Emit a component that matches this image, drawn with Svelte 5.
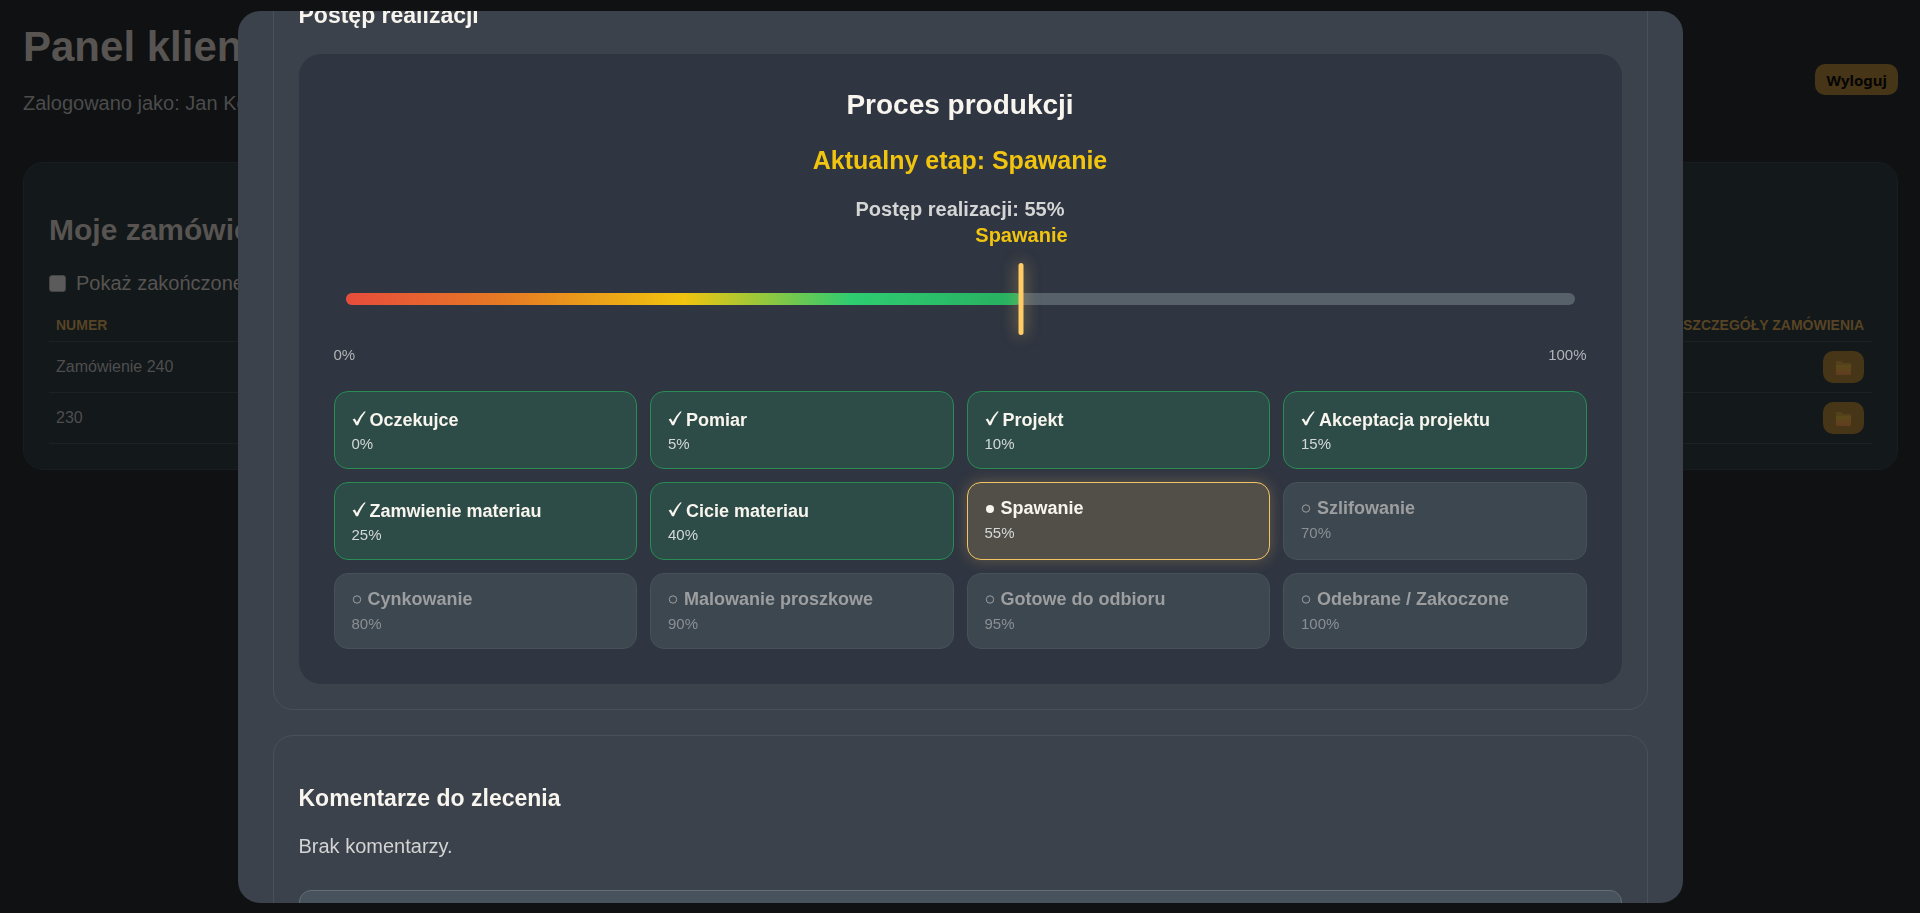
<script>
  const orders = ['Zamówienie 240', '230'];
  const progress = 55;
  const current = 'Spawanie';
  const stages = [
    ['Oczekujce', 0],
    ['Pomiar', 5],
    ['Projekt', 10],
    ['Akceptacja projektu', 15],
    ['Zamwienie materiau', 25],
    ['Cicie materiau', 40],
    ['Spawanie', 55],
    ['Szlifowanie', 70],
    ['Cynkowanie', 80],
    ['Malowanie proszkowe', 90],
    ['Gotowe do odbioru', 95],
    ['Odebrane / Zakoczone', 100]
  ].map(([name, value]) => ({
    name,
    value,
    state: value < progress ? 'done' : value === progress ? 'active' : 'pending'
  }));
</script>

<div class="page">
  <header>
    <div>
      <h1>Panel klienta</h1>
      <p>Zalogowano jako: Jan Kowalski</p>
    </div>
    <button class="logout">Wyloguj</button>
  </header>

  <main class="orders">
    <h2>Moje zamówienia</h2>
    <label class="filter"><input type="checkbox" />Pokaż zakończone</label>
    <table>
      <thead>
        <tr><th>Numer</th><th class="end">Szczegóły zamówienia</th></tr>
      </thead>
      <tbody>
        {#each orders as order}
          <tr>
            <td>{order}</td>
            <td class="end">
              <button class="details" aria-label="Szczegóły">
                <svg width="15" height="14" viewBox="0 0 15 14">
                  <defs>
                    <linearGradient id="folder" x1="0" y1="0" x2="0" y2="1">
                      <stop offset="0" stop-color="#5a4b1a" />
                      <stop offset="1" stop-color="#623c20" />
                    </linearGradient>
                  </defs>
                  <path d="M0 1Q0 0 1 0H5L7 2H14Q15 2 15 3V5H0Z" fill="#54401a" />
                  <path d="M0 4H15V13Q15 14 14 14H1Q0 14 0 13Z" fill="url(#folder)" />
                </svg>
              </button>
            </td>
          </tr>
        {/each}
      </tbody>
    </table>
  </main>
</div>

<div class="overlay">
  <div class="modal" role="dialog" aria-modal="true" aria-label="Szczegóły zamówienia">
    <section class="box scrolled">
      <h3>Postęp realizacji</h3>
      <div class="process">
        <h2>Proces produkcji</h2>
        <p class="stage">Aktualny etap: {current}</p>
        <p class="percent">Postęp realizacji: {progress}%</p>
        <div class="track">
          <div class="fill" style="width: {progress}%"></div>
          <div class="marker" style="left: {progress}%"><span>{current}</span></div>
        </div>
        <div class="scale"><span>0%</span><span>100%</span></div>
        <div class="stages">
          {#each stages as s}
            <div class="card {s.state}">
              <strong>
                {#if s.state === 'done'}
                  <svg width="14" height="15" viewBox="0 0 14 15">
                    <path d="M.6 8.6 2.8 7.4Q4 9 4.8 11Q8 4.600 12.200.600L13.800.600Q9 6.500 6 14.200H4Q2.600 11 .6 8.600Z" fill="currentColor" />
                  </svg>
                {:else}
                  <svg width="10" height="10" viewBox="0 0 10 10">
                    {#if s.state === 'active'}
                      <circle cx="5" cy="6" r="4" fill="currentColor" />
                    {:else}
                      <circle cx="5" cy="5.500" r="3.700" fill="none" stroke="currentColor" />
                    {/if}
                  </svg>
                {/if}
                {s.name}
              </strong>
              <span>{s.value}%</span>
            </div>
          {/each}
        </div>
      </div>
    </section>

    <section class="box">
      <h3>Komentarze do zlecenia</h3>
      <p class="empty">Brak komentarzy.</p>
      <textarea aria-label="Komentarz"></textarea>
    </section>
  </div>
</div>

<style>
  :global(body) {
    margin: 0;
    background: #0f1113;
    font-family: "Liberation Sans", Arial, sans-serif;
  }
  :global(html) {
    overflow: hidden;
    background: #0f1113;
  }
  h1, h2, h3, p { margin: 0; }
  button { border: 0; padding: 0; font: inherit; }

  .page { padding: 22px 22px 0 23px; color: #575451; }
  header {
    display: flex;
    justify-content: space-between;
    align-items: center;
    padding-bottom: 25px;
  }
  header > div { padding-bottom: 22px; }
  h1 { font-size: 42px; line-height: 50px; }
  header p { margin-top: 19px; font-size: 20px; line-height: 24px; color: #4c4c4c; }
  .logout {
    height: 31px;
    padding: 0 11px;
    border-radius: 10px;
    background: #473517;
    color: #050505;
    font: bold 15px "Noto Sans", sans-serif;
  }
  .orders {
    border: 1px solid #181d20;
    border-radius: 20px;
    padding: 49px 25px 25px;
    background: #13181b;
  }
  .orders h2 { font-size: 30px; line-height: 36px; }
  .filter {
    display: flex;
    align-items: center;
    gap: 10px;
    margin-top: 23px;
    font-size: 20px;
    line-height: 24px;
  }
  .filter input {
    appearance: none;
    width: 17px;
    height: 17px;
    margin: 0;
    border: 1px solid #454545;
    border-radius: 3px;
    background: #5b5b5b;
  }
  table { width: 100%; margin-top: 12px; border-collapse: collapse; }
  th {
    height: 32px;
    padding: 2px 8px 0 7px;
    border-bottom: 1px solid #1c2124;
    color: #574424;
    font-size: 14px;
    text-align: left;
    text-transform: uppercase;
  }
  td {
    height: 50px;
    padding: 0 8px 0 7px;
    border-bottom: 1px solid #1c2124;
    color: #4e4e4e;
    font-size: 16px;
  }
  .end { text-align: right; }
  .details {
    display: inline-flex;
    align-items: center;
    justify-content: center;
    width: 41px;
    height: 32px;
    padding-top: 2px;
    border-radius: 10px;
    background: #473517;
    vertical-align: middle;
  }

  .overlay {
    position: fixed;
    inset: 0;
    display: flex;
    justify-content: center;
    box-sizing: border-box;
    padding: 11px 0 10px;
  }
  .modal {
    box-sizing: border-box;
    width: calc(100% - 475px);
    padding: 0 35px;
    border-radius: 22px;
    background: #3b424b;
    overflow: hidden;
  }
  .box {
    border: 1px solid #48515a;
    border-radius: 20px;
    padding: 49px 25px 25px;
    margin-bottom: 25px;
  }
  .scrolled { margin-top: -59px; }
  h3 { color: #f8f4ee; font-size: 23px; line-height: 26px; }
  .process {
    margin-top: 26px;
    padding: 35px;
    border-radius: 22px;
    background: #2f3541;
    text-align: center;
  }
  .process h2 { color: #f8f4ee; font-size: 28px; line-height: 32px; }
  .stage { margin-top: 24px; color: #f1c40f; font-size: 25px; font-weight: bold; line-height: 30px; }
  .percent { margin-top: 22px; color: #d5d5d5; font-size: 20px; font-weight: bold; line-height: 24px; }
  .track {
    position: relative;
    height: 12px;
    margin: 72px 12px 41px;
    border-radius: 6px;
    background: #56616a;
  }
  .fill {
    height: 100%;
    border-radius: 6px;
    background: linear-gradient(90deg, #e74c3c, #e67e22, #f1c40f, #2ecc71, #27ae60);
  }
  .marker {
    position: absolute;
    top: -30px;
    width: 5px;
    height: 72px;
    border-radius: 3px;
    background: #ffcc66;
    box-shadow: 0 0 15px rgba(255, 204, 102, 0.6);
    transform: translateX(-50%);
  }
  .marker span {
    position: absolute;
    bottom: 88px;
    left: 50%;
    transform: translateX(-50%);
    color: #f1c40f;
    font-size: 20px;
    font-weight: bold;
    line-height: 24px;
  }
  .scale {
    display: flex;
    justify-content: space-between;
    color: #b2b4b6;
    font-size: 15px;
    line-height: 18px;
  }
  .stages {
    display: grid;
    grid-template-columns: repeat(4, 1fr);
    gap: 13px;
    margin-top: 27px;
    text-align: left;
  }
  .card {
    display: flex;
    flex-direction: column;
    gap: 6px;
    padding: 15px 17px;
    border: 1px solid #46515a;
    border-radius: 14px;
    background: #3d4750;
  }
  .card strong {
    display: flex;
    align-items: center;
    gap: 6px;
    font-size: 18px;
    line-height: 20px;
  }
  .card span { font-size: 15px; line-height: 18px; }
  .pending strong { color: #9d9e9f; }
  .pending span { color: #8b8f93; }
  .done { gap: 5px; border-color: #288c53; background: #2d4c47; }
  .done strong { gap: 4px; padding-top: 3px; }
  .done svg { margin-bottom: 3px; }
  .done strong, .active strong { color: #f8f4ee; }
  .done span, .active span { color: #d5d8d8; }
  .active {
    border-color: #f3c463;
    background: #514f48;
    box-shadow: 0 0 15px rgba(255, 204, 102, 0.25);
  }
  .empty { margin-top: 23px; color: #d3d3d3; font-size: 20px; line-height: 24px; }
  textarea {
    display: block;
    box-sizing: border-box;
    width: 100%;
    height: 120px;
    margin-top: 32px;
    border: 1px solid #626d76;
    border-radius: 12px;
    background: #48525c;
    resize: none;
  }
</style>
